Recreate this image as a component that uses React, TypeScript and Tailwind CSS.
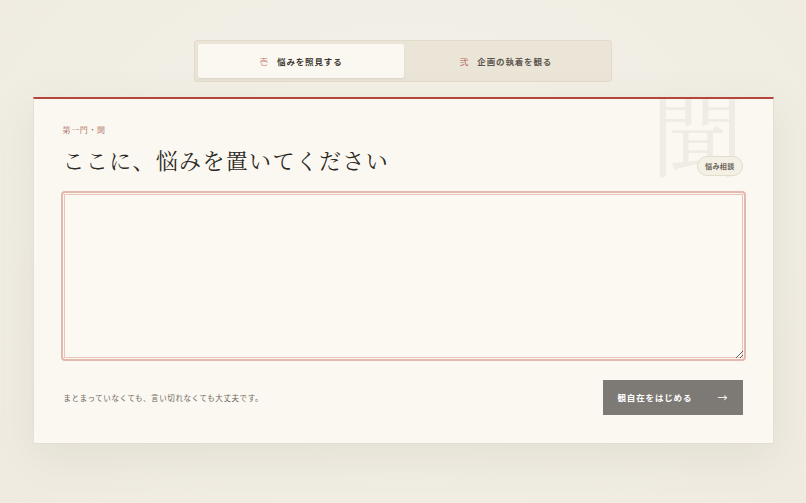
export default function App() {
  const sans = { fontFamily: '"Noto Sans CJK JP", "Noto Sans", sans-serif' };
  return (
    <div
      className="min-h-[503px] w-full bg-[#f1eee5] bg-[radial-gradient(ellipse_at_50%_40%,#f4f1e9_0%,#efebe1_100%)]"
      style={sans}
    >
      <div className="flex flex-col items-center pt-[40px]">
        {/* Tabs */}
        <div className="flex h-[42px] w-[418px] rounded-[3px] border border-[#e2dbcc] bg-[#ebe5d8] p-[3px]">
          <div className="flex w-[206px] items-center justify-center gap-[9px] rounded-[2px] bg-[#fbf8f1] shadow-[0_1px_2px_rgba(120,100,70,0.12)]">
            <span className="text-[8.5px] text-[#c4786c]">壱</span>
            <span className="text-[8.5px] font-bold tracking-[0.1em] text-[#3d3833]">悩みを照見する</span>
          </div>
          <div className="flex flex-1 items-center justify-center gap-[9px]">
            <span className="text-[8.5px] text-[#b35a4d]">弐</span>
            <span className="text-[8.5px] font-bold tracking-[0.1em] text-[#5e5750]">企画の執着を観る</span>
          </div>
        </div>

        {/* Card */}
        <div className="relative mt-[15px] w-[741px] overflow-hidden border border-t-2 border-[#e4dfd2] border-t-[#b4463b] bg-[#fbf8f1] px-[27px] pb-[28px] pt-[26px] shadow-[0_12px_40px_rgba(110,95,60,0.10)]">
          <div
            className="pointer-events-none absolute right-[28px] top-[-16px] select-none text-[94px] leading-none text-[#f0ece3]"
            style={{ fontFamily: '"Noto Serif CJK JP", "Noto Serif JP", "Noto Sans CJK JP", serif' }}
          >
            聞
          </div>

          <div className="relative flex items-end justify-between">
            <div className="pl-[2px]">
              <div
                className="text-[8px] leading-[10px] tracking-[0.08em] text-[#a55a4e]"
                style={{ fontFamily: '"Noto Serif CJK JP", "Noto Sans CJK JP", serif' }}
              >
                第一門・聞
              </div>
              <h1
                className="mt-[11px] text-[22px] leading-[28px] tracking-[0.06em] text-[#2c2824]"
                style={{ fontFamily: '"Noto Serif CJK JP", "Noto Serif JP", "Noto Sans CJK JP", serif' }}
              >
                ここに、悩みを置いてください
              </h1>
            </div>
            <div className="mb-[-2px] mr-[3px] flex h-[20px] items-center rounded-full border border-[#e2dccb] bg-[#f4f0e5] px-[7px] text-[7px] font-bold tracking-[0.05em] text-[#6c645a]">
              悩み相談
            </div>
          </div>

          <textarea
            aria-label="悩み"
            className="relative mt-[17px] block h-[170px] w-full resize-y rounded-[4px] border-2 border-[#e3b8ae] bg-[#fcf9f3] p-[10px] text-[12px] text-[#2c2824] shadow-[inset_0_0_0_1px_#fcf9f3,inset_0_0_0_2px_#e8c3ba] outline-none"
          />

          <div className="mt-[19px] flex items-center justify-between px-[3px]">
            <span className="text-[7.5px] tracking-[0.08em] text-[#6c665e]">
              まとまっていなくても、言い切れなくても大丈夫です。
            </span>
            <button className="flex h-[35px] w-[140px] items-center justify-between bg-[#7d7974] px-[15px] text-white">
              <span className="text-[8.5px] font-bold tracking-[0.1em]">観自在をはじめる</span>
              <span className="text-[10px]">→</span>
            </button>
          </div>
        </div>
      </div>
    </div>
  );
}
